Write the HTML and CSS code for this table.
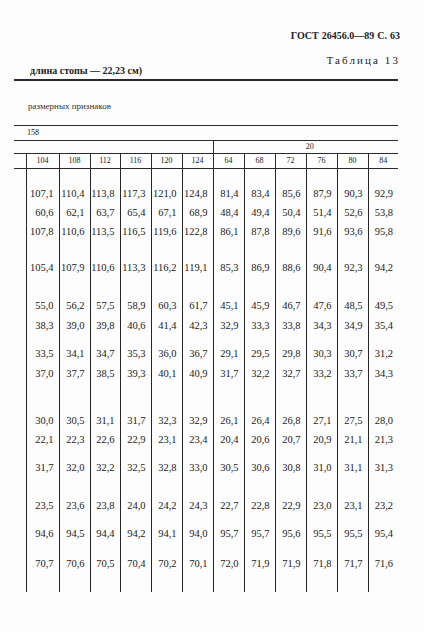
FILE: index.html
```html
<!DOCTYPE html>
<html lang="ru">
<head>
<meta charset="utf-8">
<title>ГОСТ 26456.0—89 С. 63</title>
<link rel="stylesheet" href="styles.css">
</head>
<body>
<div class="page">
  <div class="doc-id">ГОСТ 26456.0—89 С. 63</div>
  <div class="table-label">Таблица 13</div>
  <div class="title">длина стопы — 22,23 см)</div>
  <div class="rule rule-thick"></div>
  <div class="caption">размерных признаков</div>
  <div class="rule"></div>
  <div class="height-row">158</div>
  <div class="rule"></div>
  <table class="grid">
    <colgroup>
      <col class="c-pad"><col class="c33"><col class="c31"><col class="c30"><col class="c31"><col class="c31"><col class="c31">
      <col class="c31"><col class="c31"><col class="c31"><col class="c31"><col class="c31"><col class="c30">
    </colgroup>
    <tr class="group-row">
      <td colspan="7"></td>
      <td colspan="6" class="group">20</td>
    </tr>
    <tr class="head-row">
      <td></td>
      <td>104</td><td>108</td><td>112</td><td>116</td><td>120</td><td>124</td>
      <td>64</td><td>68</td><td>72</td><td>76</td><td>80</td><td>84</td>
    </tr>
    <tr class="r h34"><td></td><td>107,1</td><td>110,4</td><td>113,8</td><td>117,3</td><td>121,0</td><td>124,8</td><td>81,4</td><td>83,4</td><td>85,6</td><td>87,9</td><td>90,3</td><td>92,9</td></tr>
    <tr class="r h19"><td></td><td>60,6</td><td>62,1</td><td>63,7</td><td>65,4</td><td>67,1</td><td>68,9</td><td>48,4</td><td>49,4</td><td>50,4</td><td>51,4</td><td>52,6</td><td>53,8</td></tr>
    <tr class="r h19"><td></td><td>107,8</td><td>110,6</td><td>113,5</td><td>116,5</td><td>119,6</td><td>122,8</td><td>86,1</td><td>87,8</td><td>89,6</td><td>91,6</td><td>93,6</td><td>95,8</td></tr>
    <tr class="r h36"><td></td><td>105,4</td><td>107,9</td><td>110,6</td><td>113,3</td><td>116,2</td><td>119,1</td><td>85,3</td><td>86,9</td><td>88,6</td><td>90,4</td><td>92,3</td><td>94,2</td></tr>
    <tr class="r h38"><td></td><td>55,0</td><td>56,2</td><td>57,5</td><td>58,9</td><td>60,3</td><td>61,7</td><td>45,1</td><td>45,9</td><td>46,7</td><td>47,6</td><td>48,5</td><td>49,5</td></tr>
    <tr class="r h20"><td></td><td>38,3</td><td>39,0</td><td>39,8</td><td>40,6</td><td>41,4</td><td>42,3</td><td>32,9</td><td>33,3</td><td>33,8</td><td>34,3</td><td>34,9</td><td>35,4</td></tr>
    <tr class="r h28"><td></td><td>33,5</td><td>34,1</td><td>34,7</td><td>35,3</td><td>36,0</td><td>36,7</td><td>29,1</td><td>29,5</td><td>29,8</td><td>30,3</td><td>30,7</td><td>31,2</td></tr>
    <tr class="r h20"><td></td><td>37,0</td><td>37,7</td><td>38,5</td><td>39,3</td><td>40,1</td><td>40,9</td><td>31,7</td><td>32,2</td><td>32,7</td><td>33,2</td><td>33,7</td><td>34,3</td></tr>
    <tr class="r h47"><td></td><td>30,0</td><td>30,5</td><td>31,1</td><td>31,7</td><td>32,3</td><td>32,9</td><td>26,1</td><td>26,4</td><td>26,8</td><td>27,1</td><td>27,5</td><td>28,0</td></tr>
    <tr class="r h19"><td></td><td>22,1</td><td>22,3</td><td>22,6</td><td>22,9</td><td>23,1</td><td>23,4</td><td>20,4</td><td>20,6</td><td>20,7</td><td>20,9</td><td>21,1</td><td>21,3</td></tr>
    <tr class="r h28"><td></td><td>31,7</td><td>32,0</td><td>32,2</td><td>32,5</td><td>32,8</td><td>33,0</td><td>30,5</td><td>30,6</td><td>30,8</td><td>31,0</td><td>31,1</td><td>31,3</td></tr>
    <tr class="r h38"><td></td><td>23,5</td><td>23,6</td><td>23,8</td><td>24,0</td><td>24,2</td><td>24,3</td><td>22,7</td><td>22,8</td><td>22,9</td><td>23,0</td><td>23,1</td><td>23,2</td></tr>
    <tr class="r h28"><td></td><td>94,6</td><td>94,5</td><td>94,4</td><td>94,2</td><td>94,1</td><td>94,0</td><td>95,7</td><td>95,7</td><td>95,6</td><td>95,5</td><td>95,5</td><td>95,4</td></tr>
    <tr class="r h30"><td></td><td>70,7</td><td>70,6</td><td>70,5</td><td>70,4</td><td>70,2</td><td>70,1</td><td>72,0</td><td>71,9</td><td>71,9</td><td>71,8</td><td>71,7</td><td>71,6</td></tr>
    <tr class="r h19"><td></td><td></td><td></td><td></td><td></td><td></td><td></td><td></td><td></td><td></td><td></td><td></td><td></td></tr>
  </table>
</div>
</body>
</html>
```
FILE: styles.css
```css
html, body {
  margin: 0;
  padding: 0;
  background: #fdfdfd;
}
body {
  width: 424px;
  height: 632px;
  overflow: hidden;
  font-family: "Liberation Serif", "DejaVu Serif", serif;
  color: #222;
}
.page {
  width: 384px;
  margin-left: 14px;
}
.doc-id {
  margin-top: 30px;
  margin-right: -2px;
  height: 12px;
  line-height: 12px;
  text-align: right;
  font-weight: bold;
  font-size: 10px;
  word-spacing: 0.5px;
}
.table-label {
  margin-top: 13px;
  margin-right: -2px;
  height: 10px;
  line-height: 10px;
  text-align: right;
  font-size: 11px;
  letter-spacing: 2.1px;
}
.title {
  margin-top: 1px;
  padding-left: 16px;
  height: 10px;
  line-height: 10px;
  font-weight: bold;
  font-size: 10px;
}
.rule {
  height: 0;
  border-top: 1px solid #2a2a2a;
}
.rule-thick {
  margin-top: 3px;
  border-top-width: 2px;
}
.caption {
  margin-top: 20px;
  margin-bottom: 14px;
  padding-left: 14px;
  height: 10px;
  line-height: 10px;
  font-size: 9px;
  color: #333;
}
.height-row {
  height: 14px;
  line-height: 14px;
  padding-left: 13px;
  font-size: 8px;
}
.grid {
  width: 384px;
  table-layout: fixed;
  border-collapse: collapse;
  border-spacing: 0;
}
.c-pad { width: 12px; }
.c33 { width: 33px; }
.c31 { width: 31px; }
.c30 { width: 30px; }
.grid td {
  padding: 0;
}
.group-row td {
  height: 12px;
  border-bottom: 1px solid #2a2a2a;
  font-size: 8px;
  line-height: 12px;
}
.group-row .group {
  border-left: 1px solid #2a2a2a;
  text-align: center;
  padding-left: 8px;
}
.head-row td {
  height: 14px;
  border-bottom: 1px solid #2a2a2a;
  font-size: 8px;
  line-height: 14px;
  text-align: center;
}
.head-row td + td {
  border-left: 1px solid #2a2a2a;
}
.r td {
  vertical-align: bottom;
  text-align: right;
  padding-right: 5px;
  font-size: 10.5px;
  line-height: 18px;
  white-space: nowrap;
}
.r td + td {
  border-left: 1px solid #262626;
}
.h19 td { height: 19px; }
.h20 td { height: 20px; }
.h28 td { height: 28px; }
.h30 td { height: 30px; }
.h34 td { height: 34px; }
.h36 td { height: 36px; }
.h38 td { height: 38px; }
.h47 td { height: 47px; }
```
